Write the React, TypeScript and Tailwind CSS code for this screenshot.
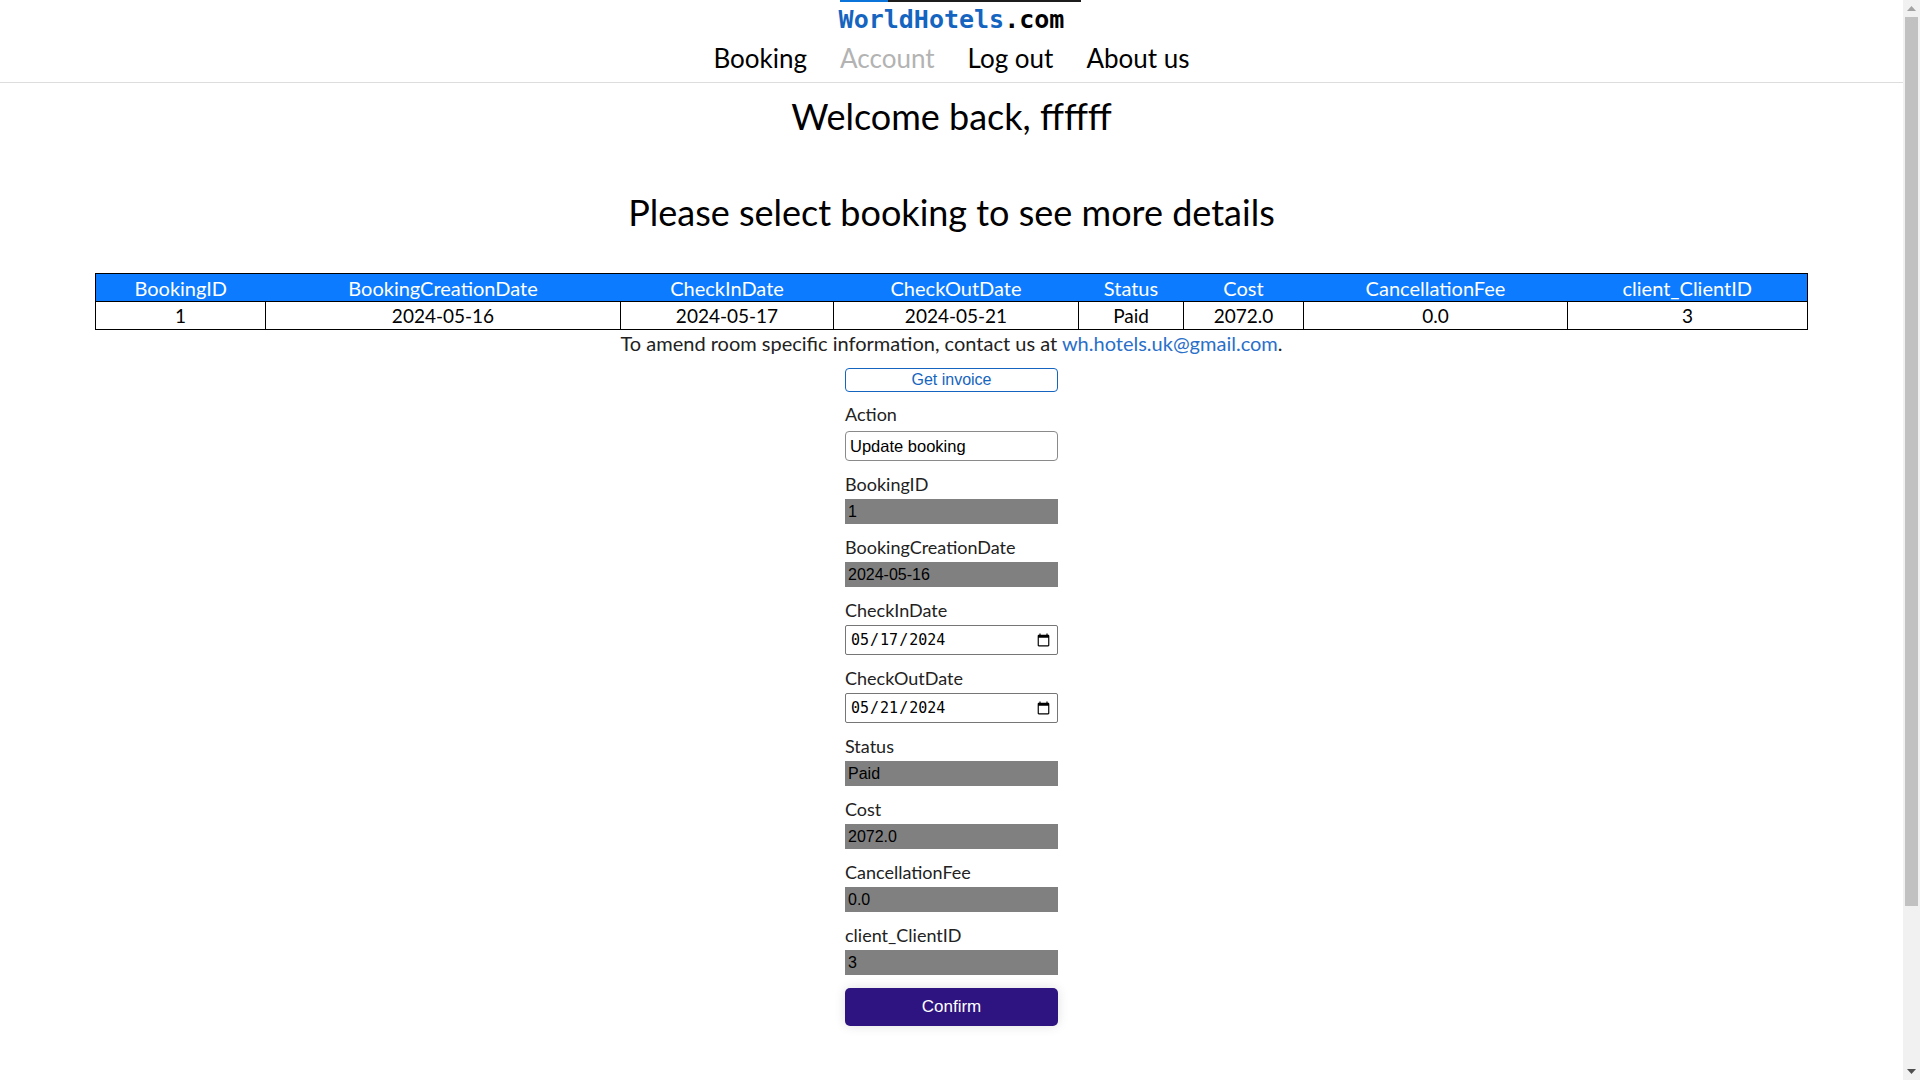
import React from 'react';

const columns = [
    { name: 'BookingID', width: 'w-[170px]' },
    { name: 'BookingCreationDate', width: 'w-[355px]' },
    { name: 'CheckInDate', width: 'w-[213px]' },
    { name: 'CheckOutDate', width: 'w-[245px]' },
    { name: 'Status', width: 'w-[105px]' },
    { name: 'Cost', width: 'w-[120px]' },
    { name: 'CancellationFee', width: 'w-[264px]' },
    { name: 'client_ClientID', width: 'w-[240px]' },
];

const row = ['1', '2024-05-16', '2024-05-17', '2024-05-21', 'Paid', '2072.0', '0.0', '3'];

function NavLink({ label, active }: { label: string; active?: boolean }) {
    return (
        <a className={active ? 'text-[#b3b3b3] cursor-default' : 'text-black hover:underline'} href="#">
            {label}
        </a>
    );
}

function ReadOnlyField({ label, value }: { label: string; value: string }) {
    return (
        <div className="flex flex-col">
            <label className="text-[18px] leading-[22px] text-[#222] mb-[4px]">{label}</label>
            <input
                readOnly
                value={value}
                className="h-[25px] w-full bg-[#808080] px-[3px] text-[16px] text-black outline-none font-['Liberation_Sans',Arial,sans-serif]"
            />
        </div>
    );
}

function DateField({ label, value }: { label: string; value: string }) {
    return (
        <div className="flex flex-col">
            <label className="text-[18px] leading-[22px] text-[#222] mb-[4px]">{label}</label>
            <input
                type="date"
                defaultValue={value}
                className="h-[30px] w-full rounded-[2px] border border-[#767676] bg-white px-[4px] text-[15px] text-black font-['DejaVu_Sans_Mono',monospace]"
            />
        </div>
    );
}

// window scrollbar, drawn since the headless browser hides it
function Scrollbar() {
    return (
        <div className="flex h-[1080px] w-[17px] flex-col items-center bg-[#f1f1f1]">
            <div className="flex h-[17px] w-full items-center justify-center">
                <svg width="9" height="5" viewBox="0 0 9 5">
                    <path d="M0 5 L4.5 0 L9 5 Z" fill="#a3a3a3" />
                </svg>
            </div>
            <div className="h-[889px] w-[13px] bg-[#c1c1c1]" />
            <div className="flex-1" />
            <div className="flex h-[17px] w-full items-center justify-center">
                <svg width="9" height="5" viewBox="0 0 9 5">
                    <path d="M0 0 L4.5 5 L9 0 Z" fill="#505050" />
                </svg>
            </div>
        </div>
    );
}

export default function App() {
    return (
        <div className="flex h-[1080px] overflow-hidden bg-white">
            <div className="relative flex-1 font-['Lato','Noto_Sans',sans-serif] text-black">
                {/* thin strip at the very top */}
                <div className="absolute left-[840px] top-0 flex h-[2px] w-[241px]">
                    <div className="w-[48px] bg-[#0a74da]" />
                    <div className="flex-1 bg-[#1c1c1c]" />
                </div>

                <header className="flex flex-col items-center border-b border-[#dddddd] pt-[4px] pb-[6px]">
                    <div className="text-[25px] leading-[32px] font-bold font-['DejaVu_Sans_Mono',monospace]">
                        <span className="text-[#1565c0]">WorldHotels</span>
                        <span className="text-black">.com</span>
                    </div>
                    <nav className="mt-[4px] flex items-center gap-[33px] text-[26px] leading-[36px]">
                        <NavLink label="Booking" />
                        <NavLink label="Account" active />
                        <NavLink label="Log out" />
                        <NavLink label="About us" />
                    </nav>
                </header>

                <main className="flex flex-col items-center">
                    <h1 className="mt-[10px] text-[36px] leading-[46px]">Welcome back, ffffff</h1>
                    <h2 className="mt-[50px] text-[36px] leading-[46px]">Please select booking to see more details</h2>

                    <table className="mt-[38px] w-[90%] table-fixed border-collapse border border-black text-center text-[19px]">
                        <colgroup>
                            {columns.map(c => (
                                <col key={c.name} className={c.width} />
                            ))}
                        </colgroup>
                        <thead>
                            <tr className="h-[28px] bg-[#0c7bff] text-white">
                                {columns.map(c => (
                                    <th key={c.name} className="text-[20px] font-normal leading-[26px]">{c.name}</th>
                                ))}
                            </tr>
                        </thead>
                        <tbody>
                            <tr className="h-[28px]">
                                {row.map((v, i) => (
                                    <td key={i} className="border border-black leading-[26px]">{v}</td>
                                ))}
                            </tr>
                        </tbody>
                    </table>

                    <p className="text-[20px] leading-[26px] text-[#222]">
                        To amend room specific information, contact us at{' '}
                        <a href="#" className="text-[#2a6fc9]">wh.hotels.uk@gmail.com</a>.
                    </p>

                    <div className="mt-[12px] flex w-[213px] flex-col">
                        <button className="h-[24px] w-full rounded-[4px] border border-[#1565c0] bg-white text-[16px] leading-[20px] text-[#1565c0] font-['Liberation_Sans',Arial,sans-serif]">
                            Get invoice
                        </button>

                        <div className="mt-[11px] flex flex-col">
                            <label className="text-[18px] leading-[22px] text-[#222] mb-[6px]">Action</label>
                            <input
                                readOnly
                                value="Update booking"
                                className="h-[30px] w-full rounded-[4px] border border-[#8a8a8a] bg-white px-[4px] text-[16.5px] text-black outline-none font-['Liberation_Sans',Arial,sans-serif]"
                            />
                        </div>

                        <div className="mt-[12px] flex flex-col gap-[12px]">
                            <ReadOnlyField label="BookingID" value="1" />
                            <ReadOnlyField label="BookingCreationDate" value="2024-05-16" />
                            <DateField label="CheckInDate" value="2024-05-17" />
                            <DateField label="CheckOutDate" value="2024-05-21" />
                            <ReadOnlyField label="Status" value="Paid" />
                            <ReadOnlyField label="Cost" value="2072.0" />
                            <ReadOnlyField label="CancellationFee" value="0.0" />
                            <ReadOnlyField label="client_ClientID" value="3" />
                        </div>

                        <button className="mt-[13px] h-[38px] w-full rounded-[5px] bg-[#2e1480] text-[17px] text-white shadow-[0_0_12px_rgba(0,0,0,0.12)] font-['Liberation_Sans',Arial,sans-serif]">
                            Confirm
                        </button>
                    </div>
                </main>
            </div>
            <Scrollbar />
        </div>
    );
}
